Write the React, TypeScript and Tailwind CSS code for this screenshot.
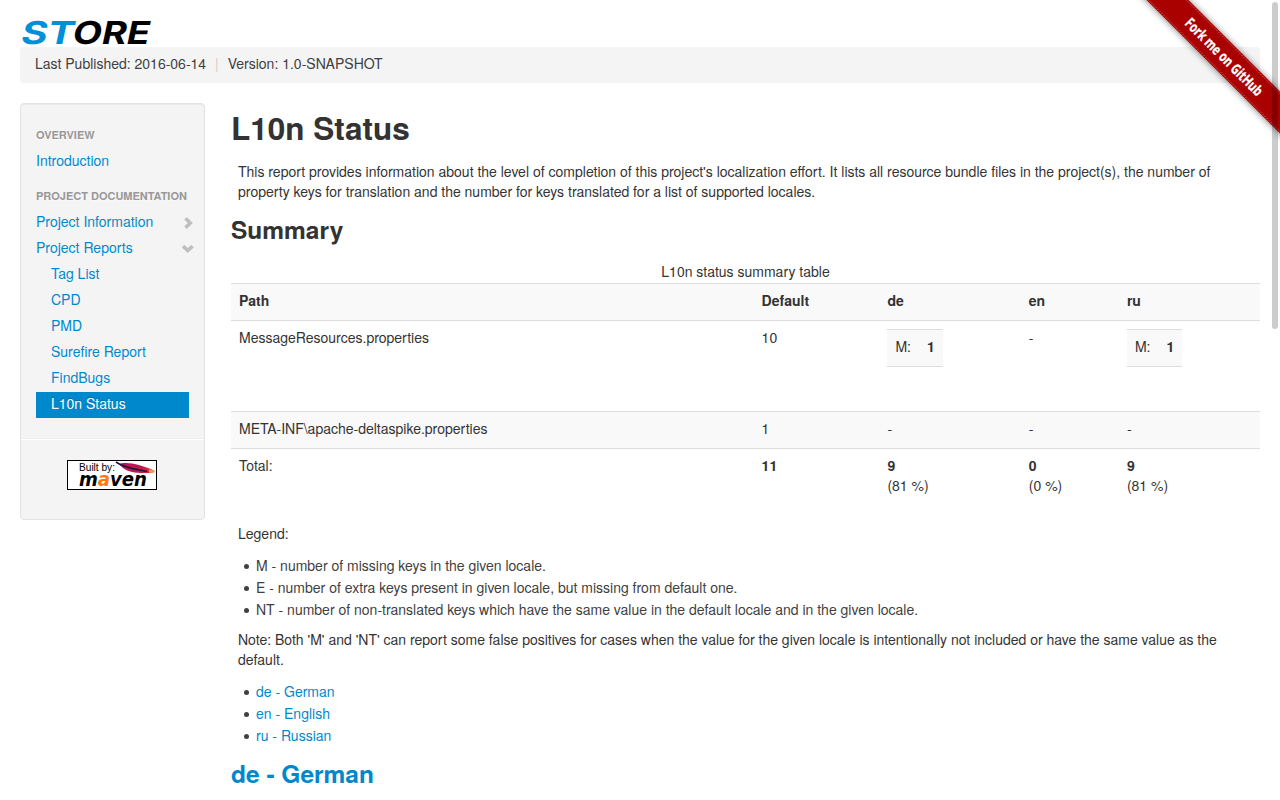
import React from 'react';

const reports = ['Tag List', 'CPD', 'PMD', 'Surefire Report', 'FindBugs'];

function StoreLogo() {
  return (
    <svg width="140" height="27" viewBox="0 0 140 27" className="block overflow-visible" aria-label="Store">
      <g transform="translate(0 24.200) skewX(-12)" fontFamily="Inter, sans-serif" fontWeight="700" fontSize="31.5">
        <text x="-0.500" y="0" textLength="53" lengthAdjust="spacingAndGlyphs" fill="#0090d8">ST</text>
        <text x="51" y="0" textLength="77" lengthAdjust="spacingAndGlyphs" fill="#000">ORE</text>
      </g>
    </svg>
  );
}

function MavenBadge() {
  return (
    <svg width="90" height="30" viewBox="0 0 90 30" className="block overflow-visible">
      <defs>
        <linearGradient id="feather" x1="0" x2="1">
          <stop offset="0" stopColor="#3b2a72" />
          <stop offset="0.2" stopColor="#c2184b" />
          <stop offset="0.5" stopColor="#b01a53" />
          <stop offset="0.8" stopColor="#d9203a" />
          <stop offset="1" stopColor="#d8a53a" />
        </linearGradient>
      </defs>
      <rect x="0.5" y="0.5" width="89" height="29" fill="#fff" stroke="#000" />
      <text x="12" y="11" fontFamily="Liberation Sans, sans-serif" fontSize="10.5" textLength="36" lengthAdjust="spacingAndGlyphs">Built by:</text>
      <path d="M52 4C57 2 65 3 72 5L84 9L88 11L86 13L77 13C68 13 61 12 56 8Z" fill="url(#feather)" />
      <path d="M49 2L54 5L65 8.500L80 11.500" fill="none" stroke="#20123f" strokeWidth="1.6" />
      <path d="M82 9.500L88 11L86 13L82 12.500Z" fill="#d2ad45" />
      <text x="12" y="26" fontFamily="DejaVu Sans, sans-serif" fontWeight="700" fontStyle="italic" fontSize="19.5" textLength="68" lengthAdjust="spacingAndGlyphs">m<tspan fill="#ff7811">a</tspan>ven</text>
    </svg>
  );
}

function Ribbon() {
  return (
    <svg width="149" height="149" viewBox="0 0 149 149" className="absolute right-0 top-0">
      <defs>
        <filter id="shade" x="-20%" y="-20%" width="140%" height="140%">
          <feGaussianBlur stdDeviation="3.5" />
        </filter>
      </defs>
      <path d="M-5 -20L180 165V123L37 -20Z" fill="#000" opacity="0.5" filter="url(#shade)" />
      <path d="M5.500 -10L160 144.500V102.500L47.500 -10Z" fill="#a90000" />
      <path d="M7.500 -10L160 142.500M45.500 -10L160 104.500" fill="none" stroke="#d98080" strokeWidth="0.8" strokeDasharray="1.5 1.2" />
      <g transform="translate(93 57) rotate(45)">
        <text x="-51.500" y="5" textLength="103" lengthAdjust="spacingAndGlyphs" fontFamily="Open Sans, sans-serif" fontWeight="700" fontSize="14.5" fill="#fff" stroke="#fff" strokeWidth="0.25">Fork me on GitHub</text>
      </g>
    </svg>
  );
}

function NavHeader({ children }: { children: React.ReactNode }) {
  return <div className="py-[3px] text-[11px] font-bold uppercase leading-5 text-[#999999] [text-shadow:0_1px_0_rgba(255,255,255,0.5)]">{children}</div>;
}

function NavLink({ children, icon }: { children: React.ReactNode; icon?: string }) {
  return (
    <a className="flex h-[26px] items-center justify-between pb-[2px] text-[#0088cc] [text-shadow:0_1px_0_rgba(255,255,255,0.5)]">
      <span>{children}</span>
      {icon && (
        <svg width="14" height="14" viewBox="0 0 14 14" className="-mr-[6px] mt-[3px]">
          <path d={icon} fill="none" stroke="#bfbfbf" strokeWidth="3.6" />
        </svg>
      )}
    </a>
  );
}

function Missing() {
  return (
    <div className="mt-[2px] flex h-[38px] w-[55.5px] justify-between border-y border-[#dddddd] bg-[#f9f9f9] px-2 pt-[6px]">
      <span>M:</span>
      <b>1</b>
    </div>
  );
}

function Total({ n, pct }: { n: number; pct: number }) {
  return (
    <td className="px-2 pb-2 pt-[6px]">
      <b>{n}</b>
      <br />({pct} %)
    </td>
  );
}

function Cell({ children }: { children: React.ReactNode }) {
  return <td className="px-2 pt-[6px]">{children}</td>;
}

function Bullet({ children }: { children: React.ReactNode }) {
  return (
    <li className="flex items-center before:mr-[7px] before:mt-[2px] before:h-[5px] before:w-[5px] before:rounded-full before:bg-[#404040] before:content-['']">
      <span>{children}</span>
    </li>
  );
}

export default function App() {
  return (
    <div className="relative h-[800px] w-[1280px] overflow-hidden bg-white px-5 pt-5 text-[14px] leading-5 text-[#333333] [font-family:'Helvetica_Neue','TeX_Gyre_Heros',Helvetica,'Liberation_Sans',sans-serif]">
      <StoreLogo />
      <div className="flex h-9 rounded bg-[#f4f4f4] px-[15px] py-[6px] text-[#404040]">
        <span>Last Published: 2016-06-14</span>
        <span className="w-[21.5px] text-center text-[#cccccc]">|</span>
        <span>Version: 1.0-SNAPSHOT</span>
      </div>

      <div className="mt-5 flex">
        <aside className="h-[417px] w-[185px] shrink-0 rounded border border-[#e3e3e3] bg-[#f4f4f4] pt-[18px] shadow-[inset_0_1px_1px_rgba(0,0,0,0.05)]">
          <nav className="whitespace-nowrap px-[15px]">
            <NavHeader>Overview</NavHeader>
            <NavLink>Introduction</NavLink>
            <div className="h-[9px]" />
            <NavHeader>Project Documentation</NavHeader>
            <NavLink icon="M4.500 2.200L9.300 7L4.500 11.800">Project Information</NavLink>
            <NavLink icon="M2 4.200L6.800 8.500L11.600 4.200">Project Reports</NavLink>
            <div className="pl-[15px]">
              {reports.map((r) => (
                <NavLink key={r}>{r}</NavLink>
              ))}
            </div>
            <a className="mt-px block h-[26px] bg-[#0088cc] pl-[15px] pt-[1px] text-white [text-shadow:0_-1px_0_rgba(0,0,0,0.2)]">L10n Status</a>
          </nav>
          <hr className="mb-5 mt-5 h-[2px] border-0 border-b border-t border-b-white border-t-[#eeeeee]" />
          <div className="pl-[46px]">
            <MavenBadge />
          </div>
        </aside>

        <main className="ml-[26px] w-[1029px] pt-[5px]">
          <h1 className="h-[53px] text-[31.5px] font-bold leading-10">L10n Status</h1>
          <p className="mb-2 px-[7px]">
            This report provides information about the level of completion of this project's localization effort. It lists all resource bundle files in the project(s), the number of property keys for translation and the number for keys translated for a list of supported locales.
          </p>
          <h2 className="mb-[12px] text-[24.5px] font-bold leading-10">Summary</h2>
          <table className="w-full table-fixed border-collapse text-left">
            <caption className="h-[22px]">L10n status summary table</caption>
            <colgroup>
              <col className="w-[522.6px]" />
              <col className="w-[125.8px]" />
              <col className="w-[141.4px]" />
              <col className="w-[98.1px]" />
              <col className="w-[141.1px]" />
            </colgroup>
            <tbody className="align-top">
              <tr className="h-[37px] border-t border-[#dddddd] bg-[#f9f9f9]">
                {['Path', 'Default', 'de', 'en', 'ru'].map((h) => (
                  <th key={h} className="px-2 pt-[6px]">{h}</th>
                ))}
              </tr>
              <tr className="h-[91px] border-t border-[#dddddd]">
                <Cell>MessageResources.properties</Cell>
                <Cell>10</Cell>
                <Cell><Missing /></Cell>
                <Cell>-</Cell>
                <Cell><Missing /></Cell>
              </tr>
              <tr className="h-[37px] border-t border-[#dddddd] bg-[#f9f9f9]">
                <Cell>META-INF\apache-deltaspike.properties</Cell>
                <Cell>1</Cell>
                <Cell>-</Cell>
                <Cell>-</Cell>
                <Cell>-</Cell>
              </tr>
              <tr className="border-t border-[#dddddd]">
                <Cell>Total:</Cell>
                <Cell><b>11</b></Cell>
                <Total n={9} pct={81} />
                <Total n={0} pct={0} />
                <Total n={9} pct={81} />
              </tr>
            </tbody>
          </table>
          <p className="mb-[11px] mt-5 px-[7px]">Legend:</p>
          <ul className="mb-[9px] pl-[13px] leading-[22px] text-[#404040]">
            <Bullet>M - number of missing keys in the given locale.</Bullet>
            <Bullet>E - number of extra keys present in given locale, but missing from default one.</Bullet>
            <Bullet>NT - number of non-translated keys which have the same value in the default locale and in the given locale.</Bullet>
          </ul>
          <p className="mb-[11px] px-[7px]">
            Note: Both 'M' and 'NT' can report some false positives for cases when the value for the given locale is intentionally not included or have the same value as the default.
          </p>
          <ul className="mb-[7px] pl-[13px] leading-[22px] text-[#404040]">
            {['de - German', 'en - English', 'ru - Russian'].map((l) => (
              <Bullet key={l}><a className="text-[#0088cc]">{l}</a></Bullet>
            ))}
          </ul>
          <h2 className="text-[24.5px] font-bold leading-10 text-[#0088cc]">de - German</h2>
        </main>
      </div>

      <Ribbon />
      <div className="absolute right-[2px] top-[2px] h-[327px] w-[6px] rounded-full bg-black/20" />
    </div>
  );
}
